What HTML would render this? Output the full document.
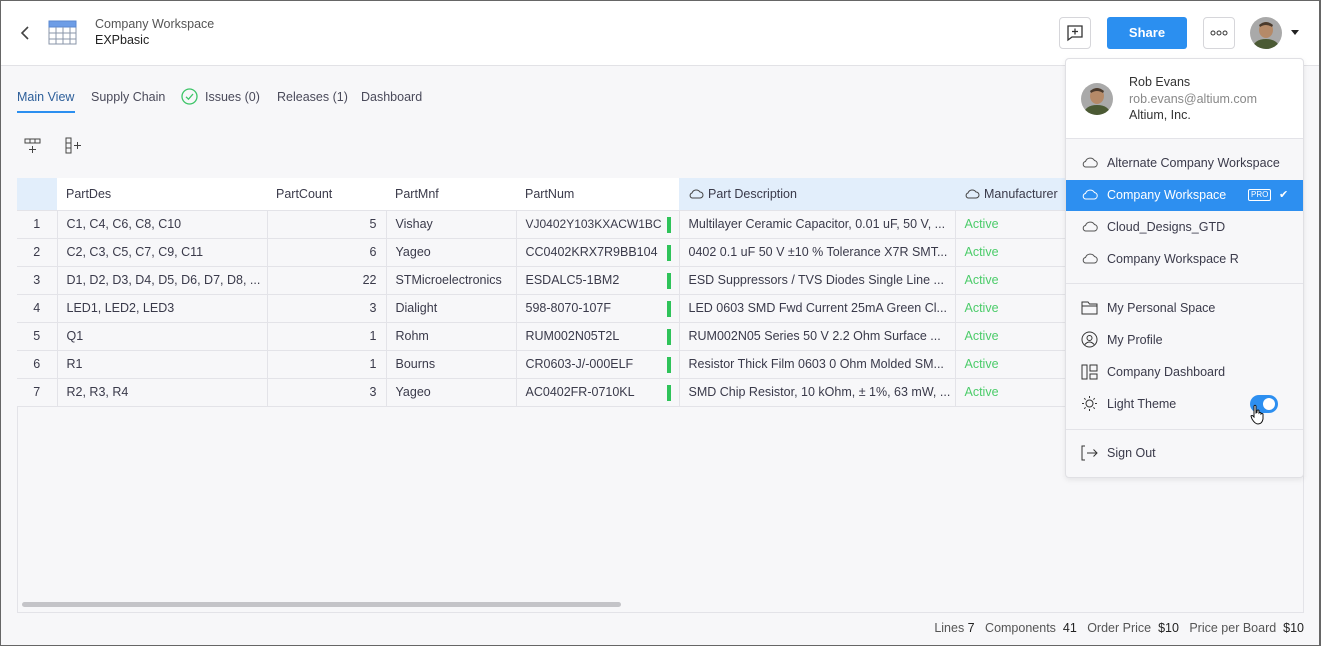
<!DOCTYPE html>
<html><head><meta charset="utf-8"><style>
*{box-sizing:border-box;margin:0;padding:0}
body{width:1321px;height:646px;overflow:hidden;font-family:"Liberation Sans",sans-serif;font-size:12.5px;color:#3a3a4a;background:#f7f7f9;position:relative}
.frame{position:absolute;inset:0;border:1px solid #666;border-right:2px solid #666;pointer-events:none;z-index:50}
.hdr{position:absolute;left:0;top:0;width:1321px;height:66px;background:#fff;border-bottom:1px solid #e2e2e6}
.abs{position:absolute}
.tab{position:absolute;top:90px;font-size:12.5px;color:#4a4a5a}
table{border-collapse:collapse;position:absolute;left:17px;top:178px;font-size:12.5px;table-layout:fixed;width:1048px}
td{height:28px;border-bottom:1px solid #e3e3e8;border-right:1px solid #e3e3e8;padding:0 9px;white-space:nowrap;overflow:hidden;color:#3a3a4a;background:#f7f7f9}
th{height:32px;font-weight:normal;text-align:left;padding:0 9px;background:#fff;border-bottom:1px solid #e3e3e8;color:#3a3a4a;white-space:nowrap;overflow:hidden}
td.n{text-align:center;padding:0}
td.r{text-align:right}
.act{color:#4ccc6a}
.bar{position:absolute;left:667px;width:4px;height:16px;background:#2fc35a}
.menu{position:absolute;left:1065px;top:58px;width:239px;height:420px;background:#f7f7f9;border:1px solid #e0e0e4;border-radius:4px;box-shadow:0 2px 6px rgba(0,0,0,.08);z-index:10}
.mi{position:absolute;left:0;width:237px;height:31px;line-height:31px;padding-left:41px;font-size:12.5px;color:#3a3a4a}
.mi svg{position:absolute;left:15px;top:8px}
</style></head><body>
<div class="hdr"></div>
<svg class="abs" style="left:19px;top:25px" width="12" height="16"><path d="M9 2 L3 8 L9 14" fill="none" stroke="#444" stroke-width="1.6"/></svg>
<svg class="abs" style="left:48px;top:20px" width="30" height="26"><rect x="1" y="1" width="27" height="23" fill="#fff" stroke="#8a96a8"/><rect x="1" y="1" width="27" height="6" fill="#6d9de6" stroke="#5a88d0"/><path d="M1 13H28M1 19H28M8 7V24M15 7V24M22 7V24" stroke="#8a96a8" fill="none"/></svg>
<div class="abs" style="left:95px;top:17px;font-size:12.5px;color:#555">Company Workspace</div>
<div class="abs" style="left:95px;top:33px;font-size:12.5px;color:#222">EXPbasic</div>
<div class="abs" style="left:1059px;top:17px;width:32px;height:32px;border:1px solid #d6d6da;border-radius:4px;background:#fff"></div>
<svg class="abs" style="left:1066px;top:24px" width="18" height="18"><path d="M2 2H16V13H6L2 16Z" fill="none" stroke="#333" stroke-width="1.3"/><path d="M9 4.5V10.5M6 7.5H12" stroke="#333" stroke-width="1.3"/></svg>
<div class="abs" style="left:1107px;top:17px;width:80px;height:32px;background:#2b8ff0;border-radius:3px;color:#fff;font-weight:bold;font-size:13px;text-align:center;line-height:32px">Share</div>
<div class="abs" style="left:1203px;top:17px;width:32px;height:32px;border:1px solid #d6d6da;border-radius:4px;background:#fff"></div>
<svg class="abs" style="left:1209px;top:29px" width="20" height="8"><circle cx="4" cy="4" r="2" fill="none" stroke="#333"/><circle cx="10" cy="4" r="2" fill="none" stroke="#333"/><circle cx="16" cy="4" r="2" fill="none" stroke="#333"/></svg>
<svg class="abs" style="left:1250px;top:17px" width="32" height="32"><defs><clipPath id="c1"><circle cx="16" cy="16" r="16"/></clipPath></defs><g clip-path="url(#c1)"><rect width="32" height="32" fill="#a9a9a9"/><ellipse cx="16" cy="13" rx="7" ry="8" fill="#b58a68"/><path d="M9 8Q16 2 23 8L22 10Q16 6 10 10Z" fill="#4a3a2c"/><path d="M2 32Q4 22 16 22Q28 22 30 32Z" fill="#4b5a34"/></g></svg>
<svg class="abs" style="left:1291px;top:30px" width="9" height="6"><path d="M0 0H8L4 5Z" fill="#222"/></svg>

<div class="tab" style="left:17px;color:#2d5f9a">Main View</div>
<div class="abs" style="left:17px;top:111px;width:58px;height:2px;background:#2b8ff0"></div>
<div class="tab" style="left:91px">Supply Chain</div>
<svg class="abs" style="left:181px;top:88px" width="17" height="17"><circle cx="8.5" cy="8.5" r="7.5" fill="none" stroke="#3cc467" stroke-width="1.3"/><path d="M5 8.8L7.5 11.2L12 6" fill="none" stroke="#3cc467" stroke-width="1.3"/></svg>
<div class="tab" style="left:205px">Issues (0)</div>
<div class="tab" style="left:277px">Releases (1)</div>
<div class="tab" style="left:361px">Dashboard</div>
<svg class="abs" style="left:24px;top:138px" width="18" height="16"><path d="M1 1H16V5H1ZM6 1V5M11 1V5M8.5 8V15M5 11.5H12" fill="none" stroke="#444"/></svg>
<svg class="abs" style="left:64px;top:137px" width="20" height="18"><path d="M2 1H7V16H2ZM2 6H7M2 11H7M10 8.5H17M13.5 5V12" fill="none" stroke="#444"/></svg>

<div class="abs" style="left:17px;top:178px;width:1287px;height:435px;border:1px solid #e3e3e8;background:#f7f7f9"></div>
<table>
<colgroup><col style="width:40px"><col style="width:210px"><col style="width:119px"><col style="width:130px"><col style="width:163px"><col style="width:276px"><col style="width:110px"></colgroup>
<tr><th style="background:#e2eefb"></th><th>PartDes</th><th>PartCount</th><th>PartMnf</th><th>PartNum</th><th style="background:#e2eefb"><svg width="16" height="11" style="vertical-align:-1px;margin-right:4px"><path d="M4 10H12A3 3 0 0 0 12 4A4.5 4.5 0 0 0 4 5A2.6 2.6 0 0 0 4 10Z" fill="none" stroke="#444"/></svg>Part Description</th><th style="background:#e2eefb;padding-right:0"><svg width="16" height="11" style="vertical-align:-1px;margin-right:4px"><path d="M4 10H12A3 3 0 0 0 12 4A4.5 4.5 0 0 0 4 5A2.6 2.6 0 0 0 4 10Z" fill="none" stroke="#444"/></svg>Manufacturer</th></tr>
<tr><td class="n">1</td><td>C1, C4, C6, C8, C10</td><td class="r">5</td><td>Vishay</td><td style="padding-right:0;font-size:12px">VJ0402Y103KXACW1BC</td><td>Multilayer Ceramic Capacitor, 0.01 uF, 50 V, ...</td><td class="act">Active</td></tr>
<tr><td class="n">2</td><td>C2, C3, C5, C7, C9, C11</td><td class="r">6</td><td>Yageo</td><td>CC0402KRX7R9BB104</td><td>0402 0.1 uF 50 V ±10 % Tolerance X7R SMT...</td><td class="act">Active</td></tr>
<tr><td class="n">3</td><td>D1, D2, D3, D4, D5, D6, D7, D8, ...</td><td class="r">22</td><td>STMicroelectronics</td><td>ESDALC5-1BM2</td><td>ESD Suppressors / TVS Diodes Single Line ...</td><td class="act">Active</td></tr>
<tr><td class="n">4</td><td>LED1, LED2, LED3</td><td class="r">3</td><td>Dialight</td><td>598-8070-107F</td><td>LED 0603 SMD Fwd Current 25mA Green Cl...</td><td class="act">Active</td></tr>
<tr><td class="n">5</td><td>Q1</td><td class="r">1</td><td>Rohm</td><td>RUM002N05T2L</td><td>RUM002N05 Series 50 V 2.2 Ohm Surface ...</td><td class="act">Active</td></tr>
<tr><td class="n">6</td><td>R1</td><td class="r">1</td><td>Bourns</td><td>CR0603-J/-000ELF</td><td>Resistor Thick Film 0603 0 Ohm Molded SM...</td><td class="act">Active</td></tr>
<tr><td class="n">7</td><td>R2, R3, R4</td><td class="r">3</td><td>Yageo</td><td>AC0402FR-0710KL</td><td>SMD Chip Resistor, 10 kOhm, ± 1%, 63 mW, ...</td><td class="act">Active</td></tr>
</table>
<div class="bar" style="top:217px"></div>
<div class="bar" style="top:245px"></div>
<div class="bar" style="top:273px"></div>
<div class="bar" style="top:301px"></div>
<div class="bar" style="top:329px"></div>
<div class="bar" style="top:357px"></div>
<div class="bar" style="top:385px"></div>
<div class="abs" style="left:22px;top:602px;width:599px;height:5px;background:#c4c4c8;border-radius:3px"></div>
<div class="abs" style="right:17px;top:621px;font-size:12.5px;color:#555;white-space:nowrap">Lines <span style="color:#222">7</span>&nbsp;&nbsp;&nbsp;Components&nbsp; <span style="color:#222">41</span>&nbsp;&nbsp;&nbsp;Order Price&nbsp; <span style="color:#222">$10</span>&nbsp;&nbsp;&nbsp;Price per Board&nbsp; <span style="color:#222">$10</span></div>

<div class="menu">
<div style="position:absolute;left:0;top:0;width:237px;height:80px;background:#fff;border-bottom:1px solid #e3e3e8;border-radius:4px 4px 0 0"></div>
<svg class="abs" style="left:15px;top:24px" width="32" height="32"><defs><clipPath id="c2"><circle cx="16" cy="16" r="16"/></clipPath></defs><g clip-path="url(#c2)"><rect width="32" height="32" fill="#a9a9a9"/><ellipse cx="16" cy="13" rx="7" ry="8" fill="#b58a68"/><path d="M9 8Q16 2 23 8L22 10Q16 6 10 10Z" fill="#4a3a2c"/><path d="M2 32Q4 22 16 22Q28 22 30 32Z" fill="#4b5a34"/></g></svg>
<div class="abs" style="left:63px;top:16px;font-size:12.5px;color:#333">Rob Evans</div>
<div class="abs" style="left:63px;top:33px;font-size:12.5px;color:#888">rob.evans@altium.com</div>
<div class="abs" style="left:63px;top:49px;font-size:12.5px;color:#333">Altium, Inc.</div>
<div class="mi" style="top:89px"><svg width="18" height="12"><path d="M4.5 11H13.5A3.3 3.3 0 0 0 13.5 4.5A5 5 0 0 0 4.5 5.5A2.8 2.8 0 0 0 4.5 11Z" fill="none" stroke="#555"/></svg>Alternate Company Workspace</div>
<div class="mi" style="top:121px;background:#2d8ff0;color:#fff"><svg width="18" height="12"><path d="M4.5 11H13.5A3.3 3.3 0 0 0 13.5 4.5A5 5 0 0 0 4.5 5.5A2.8 2.8 0 0 0 4.5 11Z" fill="none" stroke="#fff"/></svg>Company Workspace<span style="position:absolute;left:182px;top:9px;border:1px solid #fff;border-radius:2px;font-size:8px;line-height:10px;padding:0 2px">PRO</span><span style="position:absolute;left:213px;font-size:11px">✔</span></div>
<div class="mi" style="top:153px"><svg width="18" height="12"><path d="M4.5 11H13.5A3.3 3.3 0 0 0 13.5 4.5A5 5 0 0 0 4.5 5.5A2.8 2.8 0 0 0 4.5 11Z" fill="none" stroke="#555"/></svg>Cloud_Designs_GTD</div>
<div class="mi" style="top:185px"><svg width="18" height="12"><path d="M4.5 11H13.5A3.3 3.3 0 0 0 13.5 4.5A5 5 0 0 0 4.5 5.5A2.8 2.8 0 0 0 4.5 11Z" fill="none" stroke="#555"/></svg>Company Workspace R</div>
<div class="abs" style="left:0;top:224px;width:237px;height:1px;background:#e3e3e8"></div>
<div class="mi" style="top:234px"><svg width="18" height="16" style="top:7px"><path d="M1 2H7L8.5 4H16V14H1ZM1 6H16" fill="none" stroke="#333"/></svg>My Personal Space</div>
<div class="mi" style="top:266px"><svg width="18" height="18" style="top:6px"><circle cx="8.5" cy="8.5" r="7.5" fill="none" stroke="#333"/><circle cx="8.5" cy="7" r="2.5" fill="none" stroke="#333"/><path d="M3.8 13.5Q8.5 8.5 13.2 13.5" fill="none" stroke="#333"/></svg>My Profile</div>
<div class="mi" style="top:298px"><svg width="18" height="16" style="top:7px"><path d="M1 1H6V15H1ZM9 1H16V7H9ZM9 10H16V15H9Z" fill="none" stroke="#333"/></svg>Company Dashboard</div>
<div class="mi" style="top:330px"><svg width="18" height="18" style="top:6px"><circle cx="8.5" cy="8.5" r="3.5" fill="none" stroke="#333"/><path d="M8.5 1V3M8.5 14V16M1 8.5H3M14 8.5H16M3.2 3.2L4.6 4.6M12.4 12.4L13.8 13.8M3.2 13.8L4.6 12.4M12.4 4.6L13.8 3.2" stroke="#333"/></svg>Light Theme</div>
<div class="abs" style="left:184px;top:336px;width:28px;height:18px;background:#2d8ff0;border-radius:9px"></div>
<div class="abs" style="left:197px;top:339px;width:12px;height:12px;background:#fff;border-radius:6px"></div>
<svg class="abs" style="left:184px;top:345px" width="16" height="22"><path d="M4 2Q5 0.5 6 2V9L7 8.5V6.5Q8 5.5 9 6.5V9Q10 8 11 9V10Q12 9 13 10V15Q12 20 8 20Q5 20 2 15L1 12Q2 11 3 12L4 13Z" fill="#fff" stroke="#111" stroke-width="1"/></svg>
<div class="abs" style="left:0;top:370px;width:237px;height:1px;background:#e3e3e8"></div>
<div class="mi" style="top:379px"><svg width="18" height="16" style="top:7px"><path d="M4 1H1V15H4M6 8H16M12.5 4.5L16 8L12.5 11.5" fill="none" stroke="#333"/></svg>Sign Out</div>
</div>
<div class="frame"></div>
</body></html>
